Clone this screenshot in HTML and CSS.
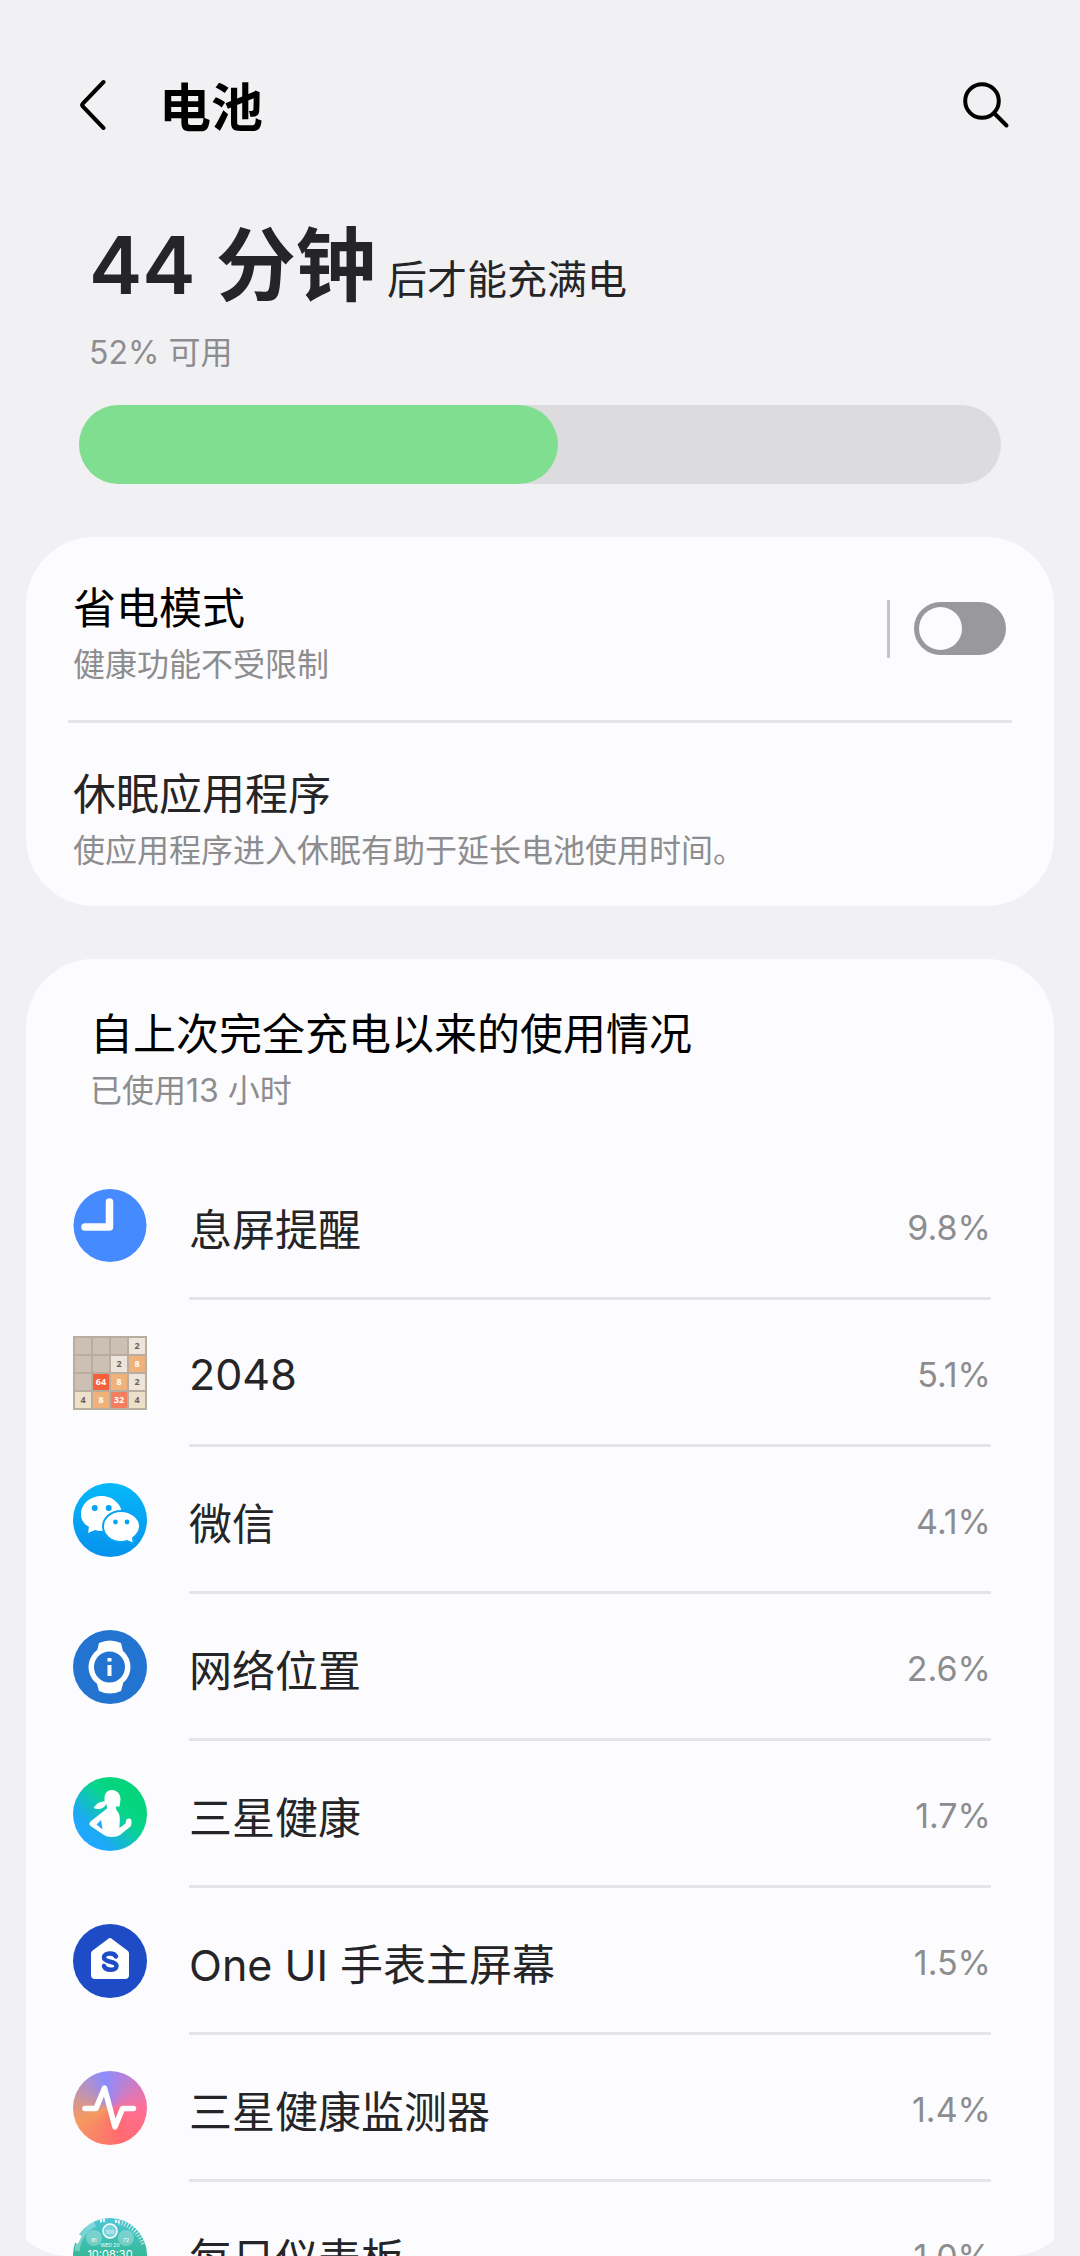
FILE: index.html
```html
<!DOCTYPE html>
<html lang="zh-CN">
<head>
<meta charset="utf-8">
<meta name="viewport" content="width=device-width, initial-scale=1">
<title>电池</title>
<link rel="stylesheet" href="styles.css">
</head>
<body>
<div class="screen">
  <header class="topbar">
    <button class="icon-button" type="button" aria-label="返回">
      <svg class="back-icon" viewBox="0 0 28 52"><path d="M24.500 3L3.800 24.500q-1.300 1.500 0 3L24.500 49"/></svg>
    </button>
    <h1 class="title">电池</h1>
    <button class="icon-button" type="button" aria-label="搜索">
      <svg class="search-icon" viewBox="0 0 48 48"><circle cx="20" cy="20" r="16.800"/><path d="M32.500 32.500L44.500 44.500"/></svg>
    </button>
  </header>

  <main>
    <section class="charge">
      <p class="charge-time"><strong>44 分钟</strong> <span>后才能充满电</span></p>
      <p class="note">52% 可用</p>
      <div class="meter" role="progressbar" aria-label="电量" aria-valuenow="52" aria-valuemin="0" aria-valuemax="100">
        <div class="meter-fill" style="width: 52%"></div>
      </div>
    </section>

    <section class="card settings">
      <div class="setting">
        <div class="setting-text">
          <label class="heading strong" for="saver">省电模式</label>
          <p class="note">健康功能不受限制</p>
        </div>
        <input class="switch" type="checkbox" role="switch" id="saver">
      </div>
      <a class="setting" href="#sleep">
        <span class="setting-text">
          <span class="heading">休眠应用程序</span>
          <span class="note">使应用程序进入休眠有助于延长电池使用时间。</span>
        </span>
      </a>
    </section>

    <section class="card usage">
      <div class="usage-head">
        <h2 class="heading strong">自上次完全充电以来的使用情况</h2>
        <p class="note">已使用13 小时</p>
      </div>
      <ul class="apps">
        <li class="app">
          <svg class="app-icon" viewBox="0 0 74 74"><circle cx="37" cy="36.500" r="36.500" fill="#468aff"/><path d="M36.500 13v25H12" fill="none" stroke="#fcfcfe" stroke-width="7.500" stroke-linecap="round" stroke-linejoin="round"/></svg>
          <div class="app-row"><span class="app-name">息屏提醒</span><span class="percent">9.8%</span></div>
        </li>
        <li class="app">
          <svg class="app-icon" viewBox="0 0 74 74">
            <path fill="#b9ada0" d="M0 0h74v74H0z"/>
            <path fill="#cbc0b3" d="M2 2h16v16H2zM20 2h16v16H20zM38 2h16v16H38zM2 20h16v16H2zM20 20h16v16H20zM2 38h16v16H2z"/>
            <path fill="#ede4dc" d="M56 2h16v16H56zM38 20h16v16H38zM56 38h16v16H56z"/>
            <path fill="#f0b17b" d="M56 20h16v16H56zM38 38h16v16H38zM20 56h16v16H20z"/>
            <path fill="#ece0c9" d="M2 56h16v16H2zM56 56h16v16H56z"/>
            <path fill="#f45f3c" d="M20 38h16v16H20z"/><path fill="#f47d60" d="M38 56h16v16H38z"/>
            <g class="tiles"><text x="64" y="13">2</text><text x="46" y="31">2</text><text x="64" y="49">2</text><text x="10" y="67">4</text><text x="64" y="67">4</text></g>
            <g class="tiles light"><text x="64" y="31">8</text><text x="28" y="49">64</text><text x="46" y="49">8</text><text x="28" y="67">8</text><text x="46" y="67">32</text></g>
          </svg>
          <div class="app-row"><span class="app-name">2048</span><span class="percent">5.1%</span></div>
        </li>
        <li class="app">
          <svg class="app-icon" viewBox="0 0 74 74">
            <defs><linearGradient id="chat" x1="0" y1="0" x2="0" y2="1"><stop stop-color="#06b8f8"/><stop offset="1" stop-color="#0691ee"/></linearGradient></defs>
            <circle cx="37" cy="37" r="37" fill="url(#chat)"/>
            <path fill="#fff" d="M29 13c-12 0-21 8-21 18 0 6 3 10 8 13l-1 6 7-3c3 1 6 1 9 1 10 0 18-8 18-17S40 13 29 13z"/>
            <path fill="#fff" stroke="#05a5f3" stroke-width="2" d="M48 28c-10 0-18 7-18 15.500S38 59 48 59c2 0 4 0 6-1l7 3-1-6c4-3 7-7 7-12 0-8-9-15-19-15z"/>
            <g fill="#05a5f3"><circle cx="21.700" cy="25" r="3"/><circle cx="35.700" cy="25" r="3"/><circle cx="42.500" cy="39" r="2.400"/><circle cx="54" cy="39" r="2.400"/></g>
          </svg>
          <div class="app-row"><span class="app-name">微信</span><span class="percent">4.1%</span></div>
        </li>
        <li class="app">
          <svg class="app-icon" viewBox="0 0 74 74">
            <circle cx="37" cy="37" r="37" fill="#2374d1"/>
            <path fill="#fff" d="M26 13q11-5 22 0l2 8v33l-2 7q-11 5-22 0l-2-7V21z"/>
            <circle cx="36.500" cy="37" r="21" fill="#fff"/><circle cx="36.500" cy="37" r="15.500" fill="#2374d1"/>
            <path fill="#fff" d="M34.500 28h4v3.500h-4zM34.500 35h4v11h-4z"/>
          </svg>
          <div class="app-row"><span class="app-name">网络位置</span><span class="percent">2.6%</span></div>
        </li>
        <li class="app">
          <svg class="app-icon" viewBox="0 0 74 74">
            <defs><linearGradient id="health" x1=".2" y1=".85" x2=".75" y2=".3"><stop stop-color="#1fa8ff"/><stop offset=".2" stop-color="#1caaf2"/><stop offset=".75" stop-color="#08d58c"/><stop offset="1" stop-color="#04d47c"/></linearGradient></defs>
            <circle cx="37" cy="37" r="37" fill="url(#health)"/>
            <path fill="#fff" d="M39 13c-4.500 0-7.500 3.500-7.500 8v3.500c-4-.5-8 1.500-11 6.500 5 2 10 1 12-3l1-1 .5 4.500L17.500 44.500c-1.500 1.500-1.500 3 0 4.500L31 58c3 2.500 12 2.500 16 0l10.500-8.500C58.500 48 58.500 46 58.500 43.500c-.5-3-5-2.500-5.500 0l-.5 3L46.500 51c0-4 1-10-.5-14-1-3-3-3.500-3-6v-1.500h3.500l1-7c0-6-4-9.500-8.500-9.500z"/>
            <path fill="#1ea9ff" d="M28 43l1.500 9.500-6-5z"/>
          </svg>
          <div class="app-row"><span class="app-name">三星健康</span><span class="percent">1.7%</span></div>
        </li>
        <li class="app">
          <svg class="app-icon" viewBox="0 0 74 74">
            <circle cx="37" cy="37" r="37" fill="#1e4cc7"/>
            <path fill="#fff" d="M35 15q2-2 4 0l16 12q1 1 1 3v21q0 4-4 4H22q-4 0-4-4V30q0-2 1-3z"/>
            <path fill="none" stroke="#1e4cc7" stroke-width="4.500" stroke-linecap="round" d="M43 32.500c-2-4.500-12-4-12 1 0 5.500 12.500 3 12.500 8.500 0 5-11 5-12.500 0"/>
          </svg>
          <div class="app-row"><span class="app-name">One UI 手表主屏幕</span><span class="percent">1.5%</span></div>
        </li>
        <li class="app">
          <span class="app-icon pulse"><svg viewBox="0 0 74 74"><path fill="none" stroke="#fff" stroke-width="5.500" stroke-linecap="round" stroke-linejoin="round" d="M12 37.500h11L31.500 17 42 56l7.500-18.500h11"/></svg></span>
          <div class="app-row"><span class="app-name">三星健康监测器</span><span class="percent">1.4%</span></div>
        </li>
        <li class="app">
          <svg class="app-icon" viewBox="0 0 74 74">
            <defs><linearGradient id="face" x1="0" y1="0" x2="0" y2="1"><stop stop-color="#4fc6d6"/><stop offset=".5" stop-color="#36b99b"/><stop offset="1" stop-color="#2eae7c"/></linearGradient></defs>
            <circle cx="37" cy="37" r="37" fill="url(#face)"/>
            <path d="M4 33A34 34 0 0 1 22 6" fill="none" stroke="#fff" stroke-opacity=".3" stroke-width="5"/>
            <path d="M3 25L7 17" stroke="#fff" stroke-width="4"/>
            <path d="M46 4A35 35 0 0 1 71 27" fill="none" stroke="#fff" stroke-opacity=".8" stroke-width="5" stroke-dasharray="1 2"/>
            <path d="M27 3l5-1M42 3l4 1" stroke="#fff" stroke-width="3" stroke-dasharray="2 1"/>
            <g fill="#fff" fill-opacity=".28"><circle cx="21" cy="20" r="8"/><circle cx="53" cy="20" r="8"/></g>
            <circle cx="37" cy="13" r="7" fill="#7bd3de" stroke="#fff" stroke-width="1.500"/>
            <g class="watch"><text x="37" y="16">100</text><text x="21" y="24">81</text><text x="53" y="24">72</text><text x="37" y="29">WED 20</text><text class="watch-time" x="37" y="40">10:08:30</text></g>
          </svg>
          <div class="app-row"><span class="app-name">每日仪表板</span><span class="percent">1.0%</span></div>
        </li>
      </ul>
    </section>
  </main>
  <svg class="corner left" viewBox="0 0 40 16"><path d="M0 0Q16 14 40 16H0z"/></svg>
  <svg class="corner right" viewBox="0 0 40 16"><path d="M40 0Q24 14 0 16h40z"/></svg>
</div>
</body>
</html>
```
FILE: styles.css
```css
* { box-sizing: border-box; }
body, h1, h2, p, ul { margin: 0; padding: 0; }

body {
  background: #f1f1f3;
  color: #252527;
  font-family: Inter, "Noto Sans CJK SC", sans-serif;
}

.screen {
  position: relative;
  height: 100vh;
  overflow: hidden;
}

/* Top bar */
.topbar {
  display: flex;
  align-items: center;
  padding: 62px 64px 0 63px;
  height: 148px;
}
.icon-button {
  display: flex;
  align-items: center;
  justify-content: center;
  width: 60px;
  height: 84px;
  padding: 0;
  border: 0;
  background: none;
}
.back-icon { width: 28px; height: 52px; }
.search-icon { width: 48px; height: 48px; }
.back-icon, .search-icon {
  fill: none;
  stroke: #000;
  stroke-width: 4;
  stroke-linecap: round;
}
.title {
  flex: 1;
  margin-left: 36px;
  padding-top: 8px;
  color: #000;
  font-size: 52px;
  line-height: 76px;
  font-weight: 700;
}

/* Charge summary */
.charge { padding: 69px 79px 0; }
.charge-time {
  padding-left: 10px;
  font-size: 40px;
  line-height: 96px;
}
.charge-time strong {
  font-size: 80px;
  font-weight: 600;
}
.note {
  display: block;
  color: #8d8d8f;
  font-size: 32px;
  line-height: 50px;
}
.charge .note { padding-left: 10px; }
.meter {
  height: 79px;
  margin-top: 27px;
  border-radius: 40px;
  background: #dcdcde;
}
.meter-fill {
  height: 100%;
  border-radius: 40px;
  background: #80de90;
}

/* Cards */
.card {
  margin: 53px 26px 0;
  border-radius: 68px;
  background: #fcfcfe;
}
.settings { padding: 0 42px; }
.setting {
  display: flex;
  align-items: center;
  height: 183px;
  padding: 0 6px 0 5px;
  color: inherit;
  text-decoration: none;
}
.setting + .setting {
  height: 186px;
  border-top: 3px solid #e5e5e7;
}
.setting-text {
  flex: 1;
  padding-top: 8px;
}
.heading {
  display: block;
  font-size: 43px;
  line-height: 64px;
}
h2.heading { font-weight: 400; }
.strong { color: #000; }

.switch {
  position: relative;
  appearance: none;
  width: 92px;
  height: 53px;
  margin: 0;
  border-radius: 27px;
  background: #99999d;
}
.switch::before {
  content: "";
  position: absolute;
  top: 5px;
  left: 5px;
  width: 43px;
  height: 43px;
  border-radius: 50%;
  background: #fcfcfe;
}
.switch::after {
  content: "";
  position: absolute;
  top: -2px;
  left: -27px;
  width: 3px;
  height: 58px;
  background: #c5c5c7;
}
.switch:checked { background: #3e91ff; }
.switch:checked::before { left: 44px; }

/* Usage list */
.usage-head { padding: 43px 64px 37px; }
.apps {
  padding: 0 63px 0 47px;
  list-style: none;
}
.app {
  display: flex;
  align-items: center;
  gap: 42px;
}
.app-icon {
  flex: none;
  width: 74px;
  height: 74px;
  margin-bottom: 2px;
}
.app-row {
  flex: 1;
  display: flex;
  align-items: center;
  justify-content: space-between;
  height: 147px;
  padding-top: 4px;
  border-bottom: 3px solid #e5e5e7;
}
.app:last-child .app-row { border-bottom-color: transparent; }
.app-name { font-size: 43px; }
.percent {
  color: #8d8d8f;
  font-size: 34px;
}

.tiles {
  fill: #6b6359;
  font: 700 9px "Open Sans", sans-serif;
  text-anchor: middle;
}
.light { fill: #fff; }
.pulse {
  border-radius: 50%;
  background: conic-gradient(from -10deg, #8c8cff, #ff6f96 100deg, #ff6a70 170deg, #f59a60 260deg, #8c8cff);
}
.watch {
  fill: #fff;
  font: 400 5px Inter, sans-serif;
  text-anchor: middle;
}
.watch-time { font-size: 11px; }

/* Rounded lower edge of the scrolling area */
.corner {
  position: absolute;
  bottom: 0;
  width: 40px;
  height: 16px;
  fill: #f1f1f3;
}
.left { left: 26px; }
.right { right: 26px; }
```
